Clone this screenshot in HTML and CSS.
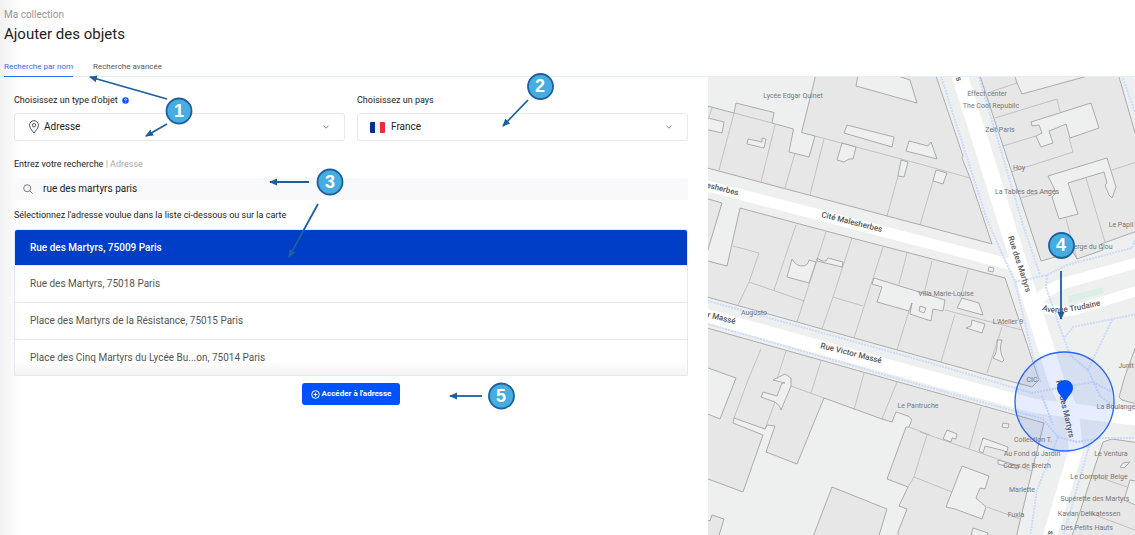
FILE: index.html
```html
<!DOCTYPE html>
<html lang="fr">
<head>
<meta charset="utf-8">
<title>Ajouter des objets</title>
<link rel="stylesheet" href="styles.css">
</head>
<body>
<header class="header">
  <div class="breadcrumb">Ma collection</div>
  <h1 class="title">Ajouter des objets</h1>
  <nav class="tabs">
    <a class="tab tab-active" href="#nom">Recherche par nom</a>
    <a class="tab" href="#avancee">Recherche avancée</a>
  </nav>
</header>
<main class="content">
  <form class="form">
    <div class="selectors">
      <div class="group">
        <div class="label-row">
          <label class="label" for="type">Choisissez un type d'objet</label>
          <svg class="help" viewBox="0 0 8 8"><circle cx="4" cy="4" r="3.7" fill="#0a4dff"/><path d="M2.8 3.2Q2.9 2 4 2t1.2 1.1Q5.200 3.700 4.200 4.100V4.900M4.200 5.600v.8" fill="none" stroke="#fff" stroke-width=".9"/></svg>
        </div>
        <div class="field">
          <svg class="pin-icon" viewBox="0 0 12 14"><path d="M6 13C3.500 9.800 1.500 7.600 1.500 5.200a4.500 4.500 0 0 1 9 0C10.500 7.600 8.500 9.800 6 13z" fill="none" stroke="#444" stroke-width=".9"/><circle cx="6" cy="5.200" r="1.700" fill="none" stroke="#444" stroke-width=".9"/></svg>
          <select class="select" id="type"><option>Adresse</option></select>
          <svg class="chevron" viewBox="0 0 8 8"><path d="M1.500 2.800L4 5.200 6.500 2.800" fill="none" stroke="#888" stroke-width="1"/></svg>
        </div>
      </div>
      <div class="group">
        <div class="label-row"><label class="label" for="pays">Choisissez un pays</label></div>
        <div class="field">
          <svg class="flag" viewBox="0 0 15 11"><rect width="15" height="11" rx="1" fill="#f3f3f3"/><path d="M1 0H5V11H1Q0 11 0 10V1Q0 0 1 0z" fill="#0a2a94"/><path d="M10 0h4q1 0 1 1v9q0 1-1 1h-4z" fill="#f0293c"/></svg>
          <select class="select" id="pays"><option>France</option></select>
          <svg class="chevron" viewBox="0 0 8 8"><path d="M1.500 2.800L4 5.200 6.500 2.800" fill="none" stroke="#888" stroke-width="1"/></svg>
        </div>
      </div>
    </div>
    <label class="label search-label" for="q">Entrez votre recherche <span class="muted">| Adresse</span></label>
    <div class="search">
      <svg class="search-icon" viewBox="0 0 10 10"><circle cx="4.200" cy="4.200" r="3.500" fill="none" stroke="#666" stroke-width=".9"/><path d="M6.800 6.800L9.600 9.600" stroke="#666" stroke-width=".9"/></svg>
      <input class="search-input" id="q" type="text" value="rue des martyrs paris">
    </div>
    <p class="hint">Sélectionnez l'adresse voulue dans la liste ci-dessous ou sur la carte</p>
    <ul class="results">
      <li><button type="button" class="result result-active">Rue des Martyrs, 75009 Paris</button></li>
      <li><button type="button" class="result">Rue des Martyrs, 75018 Paris</button></li>
      <li><button type="button" class="result">Place des Martyrs de la Résistance, 75015 Paris</button></li>
      <li><button type="button" class="result result-last">Place des Cinq Martyrs du Lycée Bu...on, 75014 Paris</button></li>
    </ul>
    <button class="submit" type="button">
      <svg class="submit-icon" viewBox="0 0 9 9"><circle cx="4.500" cy="4.500" r="3.800" fill="none" stroke="#fff" stroke-width="1"/><path d="M4.500 2.600v3.800M2.600 4.500h3.800" stroke="#fff" stroke-width="1"/></svg>
      <span>Accéder à l'adresse</span>
    </button>
  </form>
  <section class="map" aria-label="Carte">
    <svg class="map-svg" viewBox="708 77 427 458" preserveAspectRatio="xMinYMin slice">
      <rect x="708" y="77" width="427" height="458" fill="#eef0f0"/>
      <g class="roads">
        <path d="M958 70L1007 225 1056 380 1071 412" stroke-width="16"/>
        <path d="M1071 405L1076 450 1048 542" stroke-width="14"/>
        <path d="M700 184L920 241 1020 267" stroke-width="11"/>
        <path d="M700 314L920 375 1035 406 1140 419" stroke-width="14"/>
        <path d="M1034 304Q1048 288 1065 283L1140 262" stroke-width="11"/>
        <path d="M1034 304Q1055 314 1075 310L1140 290V278" stroke-width="10"/>
        <path d="M1135 70l6 26" stroke-width="5"/>
      </g>
      <path d="M1068 296L1103 287 1104 293 1069 303z" fill="#dcefe4"/>
      <g class="blocks">
        <path d="M700 104L734 113 736 103 774 112.500 772 123 793.500 129 789 152 809 157 815 136 801.500 132.500 817 70H934L963 156 962 158 970 178 992 244 700 166z"/>
        <path d="M700 197L712 200 722 203 706 256H700z"/>
        <path d="M740 208L852 238 1005 278 1039 380 1032 387 987 375 700 295V259L727 266z"/>
        <path d="M700 326L863 372 1044 423 1032 471 1015 542H700z"/>
        <path d="M978 70L1041 261 1073 252 1077 259 1103 250 1101 244 1140 230V150L1117 70z"/>
        <path d="M1070 542L1103 442 1112 439 1140 443V542z"/>
        <path d="M1140 335L1125 376 1119 397 1122 400 1140 405z"/>
      </g>
      <g class="yards">
        <path d="M748 139L762 142 762 138 766 139 764 148 747 144z"/>
        <path d="M842 143L856 147 853 159 849 159 844 162 837 160z"/>
        <path d="M847 125L894 137 892 147 844 133z"/>
        <path d="M909 141L928 146 931 142 937 159 906 151z"/>
        <path d="M859 70L856 86 917 103 910 80 895 75z"/>
        <path d="M700 116L724 122 722 133 700 128z"/>
        <path d="M936 170L947 173 943 184 933 181z"/>
        <path d="M901 160L908 162 904 177 898 176z"/>
        <path d="M792 259Q796 266 802 266T809 260L816 262 809 283 787 277z"/>
        <path d="M817 258L822 261 826 261 828 258 843 262 842 267 817 261z"/>
        <path d="M874 278L945 300 943 311 933 309 931 321 910 314 912 303 909 311 877 302 882 287 872 284z"/>
        <path d="M920 306L926 308 924 313 919 311z"/>
        <path d="M962 298L979 303 983 315 957 308z"/>
        <path d="M972 320L985 324 982 333 966 328 971 326z"/>
        <path d="M997 340L1002 340Q998 350 1004 360L1002 362 993 358Q998 352 997 340z"/>
        <path d="M989 267l5 1-1 4-5-1z"/>
        <path d="M700 365L736 378 720 419 700 411z"/>
        <path d="M773 380L785 383 782 383 777 396 763 392 761 397 775 402Q780 405 781 410L791 386V378L785 374z"/>
        <path d="M734 418L765 429 767 425 775 426 766 452 797 464 824 398 882 419 892 422 896 412 908 416Q913 419 911 422L909 427 906 427 887 479 908 487 899 506 907 509 898 532 899 542H877L887 509 832 487 811 542H717L724 519 712 515 710 521 700 518V476L743 492 763 435 733 423z"/>
        <path d="M962 466L989 476 985 489 980 488 976 498 986 507 982 519 955 509 946 507z"/>
        <path d="M947 430L957 434 956 439 952 438 951 442 943 439z"/>
        <path d="M983 438L1008 447 1007 452 1001 450 985 446 983 453 979 451z"/>
        <path d="M1003 423l6 1-1 4-6-1z"/>
        <path d="M998 460L1019 466 1018 469 998 464z"/>
        <path d="M973 528L988 533 987 538 971 535z"/>
        <path d="M1013 70L1017 83 1022 94 1095 74V70z"/>
        <path d="M1031 122L1091 103 1099 128 1070 138 1066 124 1049 131 1053 143 1041 147 1036 136 1042 133 1039 125 1032 126z"/>
        <path d="M1048 176L1107 158 1116 187 1112 198 1109 195 1105 185 1107 183 1104 172 1068 183 1078 214 1059 219 1052 197 1056 193 1054 188z"/>
        <path d="M1123 463L1130 462 1124 468 1120 467z"/>
        <path d="M1140 482L1130 480 1124 500 1140 507z"/>
      </g>
      <g class="plots">
        <path d="M712 108L709 117M734 113L719 170M734 113L772 123M775 125L761 182M795 153L785 188M824 139L810 195M815 136L920 164 970 178M898 176L887 216M933 181L920 225"/>
        <path d="M733 246L759 253 749 282 738 305M749 282L804 301M796 225L774 290M826 232L797 322M852 238L833 297 822 329M833 297L863 306M883 247L854 338M907 253L899 284M909 311L897 350M932 261L924 294M968 270L960 298M955 314L941 362M945 310L1022 330M1002 327L987 373"/>
        <path d="M761 349L748 380 734 418M786 351L777 379M821 361L811 393M791 386L824 398M775 402L765 429M864 373L854 410M897 382L882 419M909 427L930 435M920 457L914 477 908 487M914 477L952 492M920 432L1032 471M981 407L969 449M927 435L920 457M987 507L1020 519"/>
        <path d="M990 92L1017 83M995 118L1057 99 1060 112M1003 146L1036 136M1011 172L1073 152 1069 138M1020 198L1052 190M1112 170L1140 161M1086 178L1105 242M1066 219L1077 259M1093 475L1127 487M1087 512L1135 530"/>
      </g>
      <g class="paths">
        <path d="M939 70L987 220 1015 282 1035 365 1041 383"/>
        <path d="M979 77L1023 225 1040 275M1015 282L1047 275 1067 265 1132 248 1137 236"/>
        <path d="M1047 275L1046 287 1058 322 1070 355 1088 370 1113 318M1065 337L1073 327 1137 314M1088 370L1100 396 1118 410"/>
        <path d="M708 301L920 360 1032 393 1058 388 1093 382 1112 392M708 324L920 385 1043 419 1058 437 1037 490 1030 537"/>
        <path d="M1058 437L1077 442 1103 438 1137 438M1090 443L1063 537M1120 70L1137 118M1042 396L1053 425"/>
      </g>
      <g class="poi">
        <text x="793" y="98">Lycée Edgar Quinet</text><text x="987" y="96">Effect center</text>
        <text x="991" y="108">The Cool Republic</text><text x="1000" y="132">Zeit Paris</text>
        <text x="1019" y="170">Hoy</text><text x="1027" y="194">La Tables des Anges</text>
        <text x="1121" y="227">Le Papil</text><text x="1093" y="249">erge du Clou</text>
        <text x="946" y="296">Villa Marie-Louise</text><text x="1008" y="324">L'Atelier 9</text>
        <text x="754" y="315">Augusto</text><text x="918" y="408">Le Pantruche</text>
        <text x="1126" y="368">Junit</text><text x="1032" y="382">CIC</text>
        <text x="1116" y="409">La Boulange</text><text x="1033" y="442">Collection T.</text>
        <text x="1032" y="456">Au Fond du Jardin</text><text x="1027" y="468">Cœur de Breizh</text>
        <text x="1022" y="492">Marlette</text><text x="1016" y="517">Fuxia</text>
        <text x="1111" y="456">Le Ventura</text><text x="1099" y="479">Le Comptoir Belge</text>
        <text x="1095" y="501">Supérette des Martyrs</text><text x="1089" y="516">Kavian Delikatessen</text>
        <text x="1087" y="530">Des Petits Hauts</text>
      </g>
      <path id="trudaine" d="M1042 310Q1056 317 1105 304" fill="none"/>
      <g class="streets">
        <text transform="translate(704 187) rotate(14)">lesherbes</text>
        <text transform="translate(821 217) rotate(14)">Cité Malesherbes</text>
        <text transform="translate(707 317) rotate(14)">r Massé</text>
        <text transform="translate(820 348) rotate(14)">Rue Victor Massé</text>
        <text transform="translate(1008 237) rotate(72)">Rue des Martyrs</text>
        <text transform="translate(1056 381) rotate(77)">Rue des Martyrs</text>
        <text transform="translate(955 75) rotate(72)">rs</text>
        <text transform="translate(1051 538) rotate(-72)">rs</text>
        <text><textPath href="#trudaine">Avenue Trudaine</textPath></text>
      </g>
      <circle cx="1064.500" cy="401.500" r="49.500" fill="#1b5cff" fill-opacity=".11" stroke="#2b66f6" stroke-width="1.300"/>
      <path d="M1065 402C1062 396 1057 393 1057 388a8 8 0 0 1 16 0C1073 393 1068 396 1065 402z" fill="#0052ff"/>
    </svg>
  </section>
</main>
<svg class="annotations" viewBox="0 0 1135 535" preserveAspectRatio="xMinYMin meet">
  <defs><marker id="head" viewBox="0 0 8 8" refX="7" refY="4" markerWidth="8" markerHeight="8" markerUnits="userSpaceOnUse" orient="auto"><path d="M0 .5L8 4 0 7.500z" fill="#1f5f9f"/></marker></defs>
  <g class="arrows">
    <path d="M167 99L90 77"/><path d="M167 124L146 136"/><path d="M528 100L503 126"/>
    <path d="M309 182L270 182"/><path d="M318 204L289 257"/><path d="M1061 271L1061 319"/><path d="M482 396L450 396"/>
  </g>
  <g class="badges">
    <circle cx="179" cy="111" r="12.500"/><circle cx="540.500" cy="86.500" r="12.500"/><circle cx="330" cy="182" r="12.500"/><circle cx="1061.500" cy="245.500" r="12.500"/><circle cx="501.500" cy="396" r="12.500"/>
  </g>
  <g class="digits">
    <text x="179" y="117">1</text><text x="540" y="92">2</text><text x="330" y="188">3</text><text x="1061" y="251">4</text><text x="501" y="402">5</text>
  </g>
</svg>
</body>
</html>
```
FILE: styles.css
```css
* { box-sizing: border-box; }
body {
  position: relative;
  display: flex;
  flex-direction: column;
  min-height: 100vh;
  margin: 0;
  background: linear-gradient(90deg, #f1f1f1, #fff 22px);
  color: #222;
  font: 10px/12px Roboto, "Liberation Sans", sans-serif;
}
button, input, select { font: inherit; color: inherit; }
.header { padding: 8px 0 0 4px; border-bottom: 1px solid #e6ecf8; }
.breadcrumb { color: #999; line-height: 14px; }
.title { margin: 0; font-size: 15px; line-height: 24px; font-weight: 400; }
.tabs { display: flex; gap: 20px; margin: 15px 0 -1px; }
.tab { padding-bottom: 3px; border-bottom: 1px solid transparent; color: #555; font-size: 8px; text-decoration: none; }
.tab-active { border-color: #2f6bff; color: #2f6bff; }
.content { flex: 1; display: grid; grid-template-columns: minmax(0, 1fr) 427px; }
.form { display: flex; flex-direction: column; padding: 17px 20px 17px 14px; }
.selectors { display: grid; grid-template-columns: 1fr 1fr; gap: 12px; }
.group { display: flex; flex-direction: column; gap: 7px; }
.label-row { display: flex; align-items: center; gap: 4px; }
.label { font-size: 9px; }
.help { width: 7px; height: 7px; }
.field { display: flex; align-items: center; height: 28px; padding: 0 14px 0 12px; border: 1px solid #e8e8ea; border-radius: 3px; background: #fff; }
.pin-icon { width: 12px; height: 14px; margin: 0 4px 0 1px; }
.flag { width: 15px; height: 11px; margin-right: 6px; }
.select { flex: 1; min-width: 0; padding: 0; border: 0; background: none; appearance: none; outline: 0; }
.chevron { width: 8px; height: 8px; }
.search-label { margin-top: 17px; }
.muted { color: #aaa; }
.search { display: flex; align-items: center; gap: 10px; height: 22px; margin-top: 8px; padding: 0 9px; border-radius: 2px; background: #f7f9fb; }
.search-icon { width: 10px; height: 10px; }
.search-input { flex: 1; min-width: 0; padding: 0; border: 0; background: none; outline: 0; }
.hint { margin: 9px 0 8px; font-size: 9px; }
.results { margin: 0; padding: 0; border: 1px solid #e6e8ef; border-radius: 3px 3px 0 0; list-style: none; }
.results li + li { border-top: 1px solid #e6e8ef; }
.result { display: block; width: 100%; height: 36px; padding: 0 15px; border: 0; background: none; color: #555; text-align: left; }
.result-active { height: 35px; border-radius: 2px 2px 0 0; background: #003ec8; color: #fff; font-weight: 500; }
.result-last { height: 35px; background: linear-gradient(0deg, #f3f3f3, #fff 14px); }
.submit { display: flex; align-items: center; align-self: center; gap: 2px; height: 22px; margin-top: 7px; padding: 0 9px; border: 0; border-radius: 3px; background: #0052ff; color: #fff; font-size: 8px; font-weight: 700; }
.submit-icon { width: 9px; height: 9px; }
.map { position: relative; overflow: hidden; background: #eef0f0; }
.map-svg { position: absolute; inset: 0; width: 100%; height: 100%; }
.roads { fill: none; stroke: #fff; stroke-linejoin: round; }
.blocks { fill: #e7e7e7; stroke: #9b9b9b; stroke-width: .8; }
.yards { fill: #eef0f0; stroke: #9b9b9b; stroke-width: .8; }
.plots { fill: none; stroke: #aaa; stroke-width: .6; }
.paths { fill: none; stroke: #ccdbfb; stroke-width: 2; stroke-dasharray: 2 1; }
.poi { fill: #777; font-size: 7px; text-anchor: middle; }
.streets { fill: #555; font-size: 8px; font-weight: 500; paint-order: stroke; stroke: #fff; stroke-width: 1; }
.annotations { position: absolute; top: 0; left: 0; width: 100%; pointer-events: none; }
.arrows { fill: none; stroke: #1f5f9f; stroke-width: 1.8; }
.arrows path { marker-end: url(#head); }
.badges { fill: #46ade0; stroke: #1f5f9f; stroke-width: 1.8; }
.digits { fill: #fff; font: 700 18px "Liberation Sans", sans-serif; text-anchor: middle; }
```
